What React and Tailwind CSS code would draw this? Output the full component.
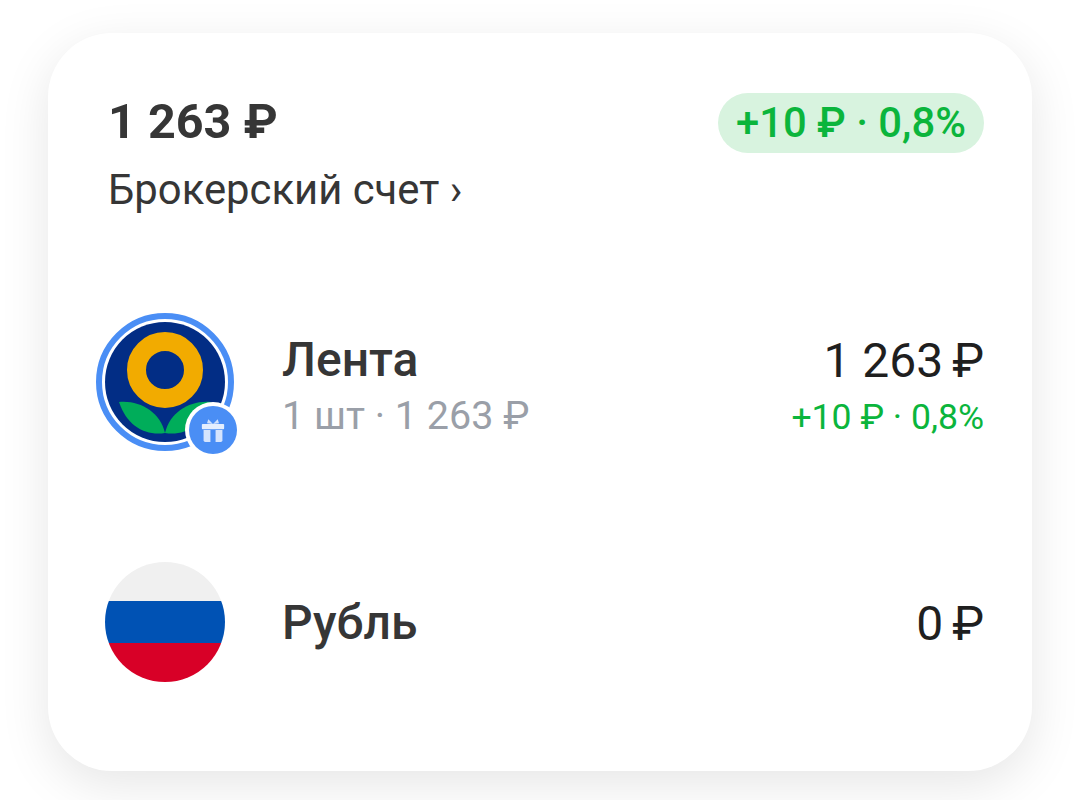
const font = { fontFamily: 'Roboto, "Noto Sans", sans-serif' };

function GiftBadge() {
  return (
    <div className="absolute left-[80px] top-[80px] w-[56px] h-[56px] rounded-full bg-white flex items-center justify-center">
      <div className="w-[48px] h-[48px] rounded-full bg-[#4a8ef5] flex items-center justify-center">
        <svg width="24" height="26" viewBox="0 0 28 30">
          <path d="M14 8 L8.5 2.5 L7 7 Z M14 8 L19.5 2.5 L21 7 Z" fill="#cfe0fc" />
          <rect x="1" y="8" width="26" height="6" rx="1" fill="#e4eefe" />
          <path d="M3 15 H11 V29 H5 Q3 29 3 27 Z" fill="#d5e4fd" />
          <path d="M17 15 H25 V27 Q25 29 23 29 H17 Z" fill="#d5e4fd" />
        </svg>
      </div>
    </div>
  );
}

function LentaLogo() {
  return (
    <div className="relative w-[120px] h-[120px] shrink-0">
      <div className="absolute -inset-[9px] rounded-full border-[6px] border-[#4a8ef5]" />
      <svg width="120" height="120" viewBox="0 0 120 120" className="block">
        <circle cx="60" cy="60" r="60" fill="#022d85" />
        <circle cx="60" cy="48" r="28.5" fill="none" stroke="#f2ab00" strokeWidth="19" />
        <path d="M14 80 C35 78 55 90 60 111 C40 114 22 104 14 80 Z" fill="#00ad5a" />
        <path d="M106 80 C85 78 65 90 60 111 C80 114 98 104 106 80 Z" fill="#00ad5a" />
      </svg>
      <GiftBadge />
    </div>
  );
}

function RubleFlag() {
  return (
    <div className="w-[120px] h-[120px] rounded-full overflow-hidden shrink-0 flex flex-col">
      <div className="h-[39px] bg-[#f0f0f0]" />
      <div className="h-[42px] bg-[#0052b4]" />
      <div className="h-[39px] bg-[#d80027]" />
    </div>
  );
}

export default function App() {
  return (
    <div className="w-[1080px] h-[800px] bg-white overflow-hidden pt-[33px] pl-[48px]" style={font}>
      <div className="w-[984px] h-[738px] bg-white rounded-[64px] shadow-[0_14px_50px_rgba(0,0,0,0.1)] pl-[57px] pr-[48px] pt-[60px]">
        {/* Header */}
        <div className="flex justify-between items-start">
          <div>
            <div className="text-[48.5px] leading-[58px] font-bold text-[#363636] pl-[3px]">1 263 ₽</div>
            <div className="text-[41.8px] leading-[50px] text-[#363636] mt-[14px] pl-[3px]">Брокерский счет ›</div>
          </div>
          <div className="h-[60px] px-[18px] rounded-full bg-[#d8f3df] text-[#0bb53c] text-[41.8px] font-medium flex items-center">
            +10 ₽ · 0,8%
          </div>
        </div>

        {/* Stock row */}
        <div className="flex items-center mt-[104px]">
          <LentaLogo />
          <div className="ml-[57px] flex-1 pt-[11px]">
            <div className="text-[48px] leading-[56px] font-medium text-[#363636]">Лента</div>
            <div className="text-[39.5px] leading-[55px] text-[#9a9fa8]">1 шт · 1 263 ₽</div>
          </div>
          <div className="text-right pt-[13px]">
            <div className="text-[48px] leading-[57px] text-[#1f1f1f]">1 263 <span className="-ml-[3px]">₽</span></div>
            <div className="text-[35.6px] leading-[56px] text-[#0bb53c]">+10 ₽ · 0,8%</div>
          </div>
        </div>

        {/* Cash row */}
        <div className="flex items-center mt-[117px]">
          <RubleFlag />
          <div className="ml-[57px] flex-1 pt-[2px] text-[48px] leading-[56px] font-medium text-[#363636]">Рубль</div>
          <div className="pt-[3px] text-[48px] leading-[56px] text-[#1f1f1f]">0 <span className="-ml-[3px]">₽</span></div>
        </div>
      </div>
    </div>
  );
}
